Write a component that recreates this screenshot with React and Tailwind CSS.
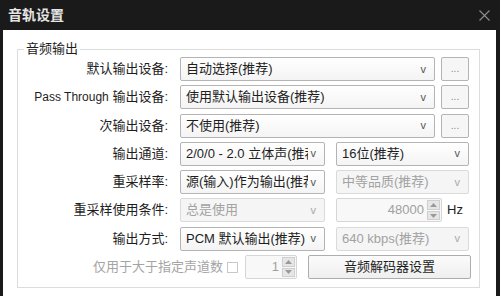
import React from "react";

const font = { fontFamily: '"Liberation Sans", "Noto Sans CJK SC", sans-serif' };

function Combo({ text, w, disabled }) {
  return (
    <div
      className={`h-[24px] ${w} flex items-center justify-between rounded-[2px] border pl-[5px] pr-[8px] overflow-hidden ${
        disabled
          ? "bg-[#f5f5f5] border-[#dadada] text-[#a2a2a2]"
          : "bg-gradient-to-b from-[#ffffff] to-[#f4f4f4] border-[#b4b4b4] text-[#1e1e1e]"
      }`}
    >
      <span className="whitespace-nowrap overflow-hidden text-[13px] leading-[16px] flex-1 min-w-0">
        {text}
      </span>
      <span
        className={`shrink-0 text-[11px] leading-[11px] ml-[3px] ${
          disabled ? "text-[#a8a8a8]" : "text-[#555]"
        }`}
      >
        v
      </span>
    </div>
  );
}

function DotsButton() {
  return (
    <div className="ml-[6px] h-[24px] w-[28px] rounded-[2px] border border-[#b4b4b4] bg-[#f6f6f6] flex items-center justify-center text-[10px] leading-[10px] text-[#888]">
      ...
    </div>
  );
}

function Spin({ value, w }) {
  return (
    <div
      className={`h-[24px] ${w} flex items-stretch rounded-[2px] border border-[#d6d6d6] bg-[#f8f8f8]`}
    >
      <div className="flex-1 flex items-center justify-end pr-[3px] text-[13px] leading-[16px] text-[#a0a0a0]">
        {value}
      </div>
      <div className="w-[13px] my-[1px] mr-[1px] flex flex-col gap-[1px]">
        <div className="flex-1 bg-[#e6e6e6] border border-[#cfcfcf] flex items-center justify-center">
          <svg width="7" height="4" viewBox="0 0 7 4">
            <path d="M0 4 L3.5 0 L7 4 Z" fill="#9a9a9a" />
          </svg>
        </div>
        <div className="flex-1 bg-[#e6e6e6] border border-[#cfcfcf] flex items-center justify-center">
          <svg width="7" height="4" viewBox="0 0 7 4">
            <path d="M0 0 L3.5 4 L7 0 Z" fill="#9a9a9a" />
          </svg>
        </div>
      </div>
    </div>
  );
}

function Label({ children }) {
  return (
    <div className="w-[150px] text-right text-[13px] leading-[16px] text-[#1e1e1e] whitespace-nowrap">
      {children}
    </div>
  );
}

export default function App() {
  return (
    <div
      className="w-[500px] h-[296px] bg-[#1a1a1a] flex flex-col overflow-hidden"
      style={font}
    >
      <div className="h-[30px] flex items-center justify-between pl-[8px] pr-[10px] shrink-0">
        <span className="text-[14px] leading-[18px] font-bold text-[#e4e4e4]">
          音轨设置
        </span>
        <svg width="11" height="11" viewBox="0 0 11 11">
          <path d="M0.5 0.5 L10.5 10.5 M10.5 0.5 L0.5 10.5" stroke="#8a8a8a" strokeWidth="1.2" />
        </svg>
      </div>
      <div className="flex-1 bg-white ml-[3px] mr-[4px] pl-[14px] pt-[11px]">
        <fieldset className="w-[463px] border border-[#dcdcdc] px-0 pb-[8px]">
          <legend className="ml-[6px] px-[2px] text-[13px] leading-[16px] text-[#1e1e1e]">
            音频输出
          </legend>
          <div className="flex flex-col gap-[4.3px]">
            <div className="flex items-center">
              <Label>默认输出设备:</Label>
              <div className="ml-[12px] flex items-center">
                <Combo text="自动选择(推荐)" w="w-[255px]" />
                <DotsButton />
              </div>
            </div>
            <div className="flex items-center">
              <Label>
                <span className="text-[12px]">Pass Through</span> 输出设备:
              </Label>
              <div className="ml-[12px] flex items-center">
                <Combo text="使用默认输出设备(推荐)" w="w-[255px]" />
                <DotsButton />
              </div>
            </div>
            <div className="flex items-center">
              <Label>次输出设备:</Label>
              <div className="ml-[12px] flex items-center">
                <Combo text="不使用(推荐)" w="w-[255px]" />
                <DotsButton />
              </div>
            </div>
            <div className="flex items-center">
              <Label>输出通道:</Label>
              <div className="ml-[12px] flex items-center gap-[11px]">
                <Combo text="2/0/0 - 2.0 立体声(推荐)" w="w-[145px]" />
                <Combo text="16位(推荐)" w="w-[133px]" />
              </div>
            </div>
            <div className="flex items-center">
              <Label>重采样率:</Label>
              <div className="ml-[12px] flex items-center gap-[11px]">
                <Combo text="源(输入)作为输出(推荐)" w="w-[145px]" />
                <Combo text="中等品质(推荐)" w="w-[133px]" disabled />
              </div>
            </div>
            <div className="flex items-center">
              <Label>重采样使用条件:</Label>
              <div className="ml-[12px] flex items-center gap-[11px]">
                <Combo text="总是使用" w="w-[145px]" disabled />
                <Spin value="48000" w="w-[106px]" />
                <span className="ml-[-6px] text-[13px] leading-[16px] text-[#1e1e1e]">Hz</span>
              </div>
            </div>
            <div className="flex items-center">
              <Label>输出方式:</Label>
              <div className="ml-[12px] flex items-center gap-[11px]">
                <Combo text="PCM 默认输出(推荐)" w="w-[145px]" />
                <Combo text="640 kbps(推荐)" w="w-[133px]" disabled />
              </div>
            </div>
            <div className="flex items-center">
              <div className="w-[205px] text-right text-[13px] leading-[16px] text-[#a4a4a4] whitespace-nowrap">
                仅用于大于指定声道数
              </div>
              <div className="ml-[4px] w-[11px] h-[11px] border border-[#c8c8c8] bg-white" />
              <div className="ml-[7px]">
                <Spin value="1" w="w-[52px]" />
              </div>
              <div className="ml-[11px] h-[24px] w-[163px] rounded-[2px] border border-[#adadad] bg-gradient-to-b from-[#fbfbfb] to-[#efefef] flex items-center justify-center text-[13px] leading-[16px] text-[#1e1e1e]">
                音频解码器设置
              </div>
            </div>
          </div>
        </fieldset>
      </div>
    </div>
  );
}
